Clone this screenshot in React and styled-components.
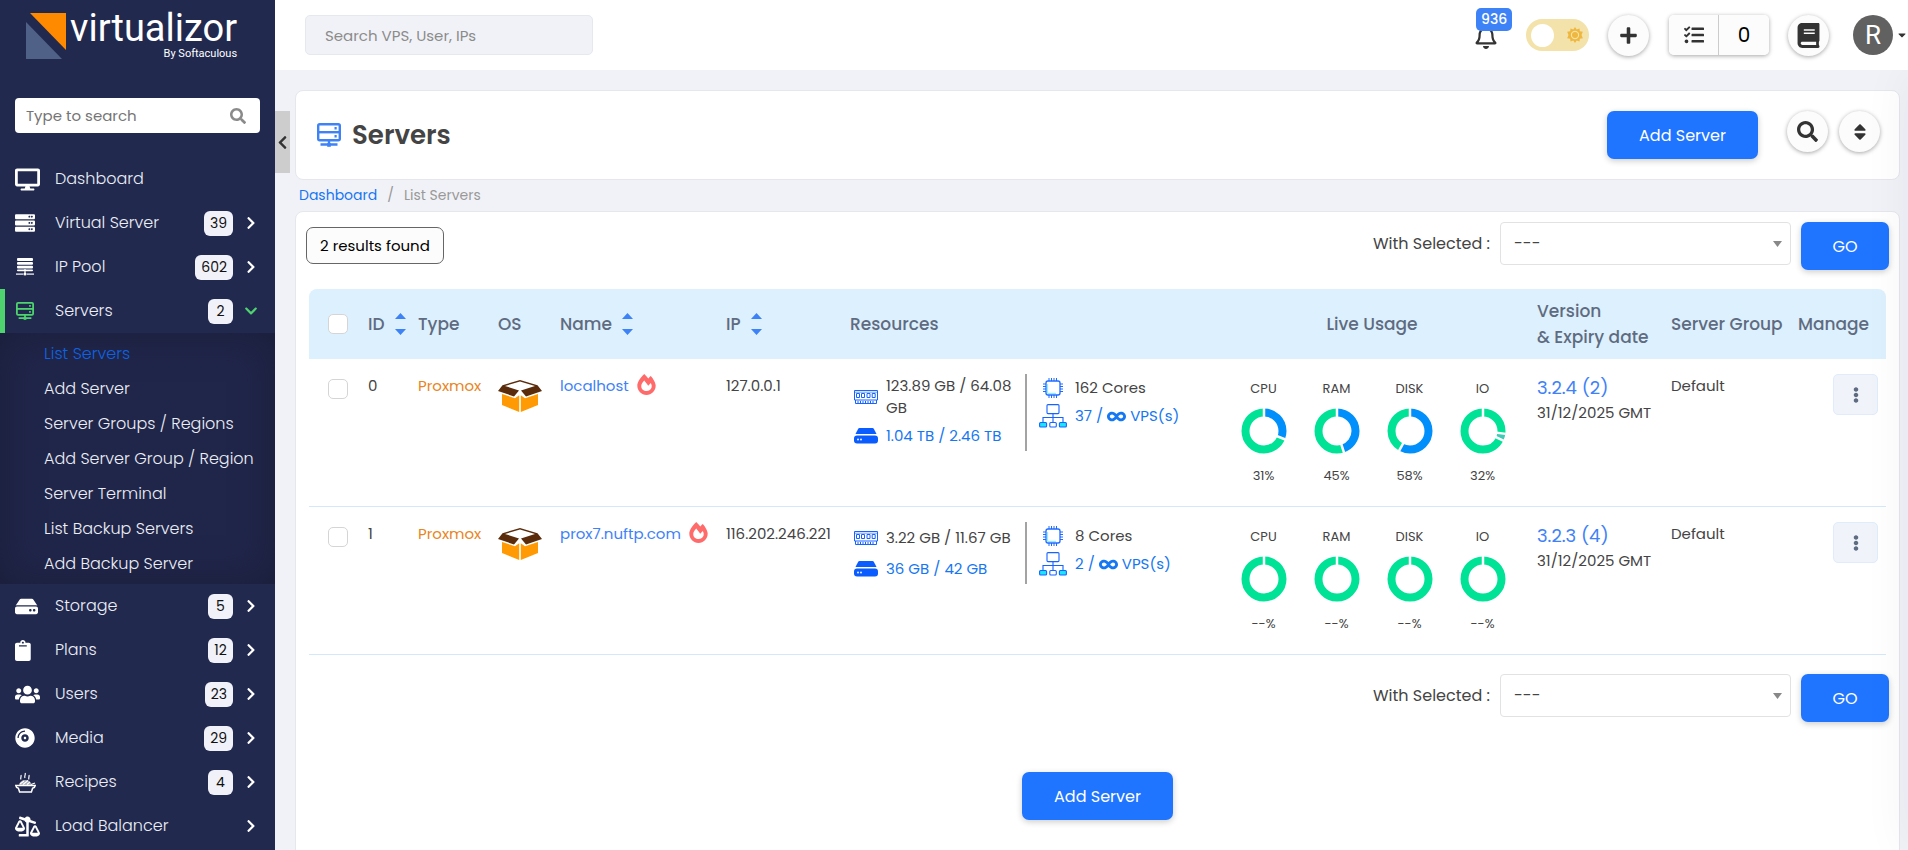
import React, { Component } from "react";
import styled, { createGlobalStyle } from "styled-components";
import {
  FaBalanceScaleRight,
  FaBook,
  FaCaretDown,
  FaChevronDown,
  FaChevronLeft,
  FaChevronRight,
  FaClipboard,
  FaCompactDisc,
  FaDesktop,
  FaEllipsisV,
  FaFireAlt,
  FaHdd,
  FaInfinity,
  FaPlus,
  FaRegBell,
  FaSearch,
  FaServer,
  FaSort,
  FaTasks,
  FaUsers
} from "react-icons/fa";

const GlobalStyle = createGlobalStyle`
  * {
    box-sizing: border-box;
  }

  body {
    margin: 0;
    background: #f1f2f7;
    color: #444;
    font-family: Poppins, Inter, sans-serif;
    font-size: 15px;
    line-height: 22px;
  }

  button, input, select {
    font-family: inherit;
  }

  button {
    cursor: pointer;
  }

  a {
    text-decoration: none;
  }

  svg {
    display: block;
    flex: none;
  }
`;

/* ---------- drawings ---------- */

const ServerIcon = ({ size }) => (
  <svg width={size} height={size} viewBox="0 0 24 24" fill="none" stroke="currentColor" strokeWidth="2.4">
    <rect x="1.2" y="1.2" width="21.6" height="16" rx="1.5" />
    <path d="M1 9.2h22" />
    <path d="M17.5 5.2h2.2M17.5 13.2h2.2" />
    <path d="M12 17v4M3.500 21.500h17" />
    <path d="M10.200 22h3.600" strokeWidth="3.6" />
  </svg>
);

const PoolIcon = () => (
  <svg width="18" height="18" viewBox="0 0 18 18" fill="currentColor">
    <rect x="1" y="0" width="16" height="3" rx="1" />
    <rect x="1" y="4" width="16" height="2.800" rx="1" />
    <rect x="1" y="7.800" width="16" height="2.800" rx="1" />
    <rect x="8.400" y="11" width="1.200" height="5" />
    <rect x="0" y="15.500" width="7" height="1.200" />
    <rect x="11" y="15.500" width="7" height="1.200" />
    <circle cx="9" cy="16" r="1.600" />
    <rect x="1" y="11.600" width="16" height="1.600" rx="0.800" />
  </svg>
);

const RecipeIcon = () => (
  <svg width="21" height="21" viewBox="0 0 21 21" fill="none" stroke="currentColor" strokeWidth="1.200">
    <path d="M6 7.500c-1-1.500.6-2.600 0-4.500M10 6c-1-1.800.8-3 .2-5M14 7.500c-1-1.500.6-2.600 0-4.500" />
    <path d="M4 13c.5-3 3-5 6.500-5s5.500 2 6 5z" fill="currentColor" fillOpacity="0.6" stroke="none" />
    <path d="M5 12l4-3M8 12.500l5-4M12 12.500l3-2.500M16 12.500l4-1.500" />
    <path d="M.8 13.600h19.400c-.2 1.400-1.200 2.400-2.600 2.600L16.400 20H4.600l-1.200-3.800C2 16 1 15 .8 13.600z" strokeWidth="1.500" />
  </svg>
);

const SunIcon = () => (
  <svg width="16" height="16" viewBox="0 0 16 16" fill="#efb73e">
    <path d="M8 0l1.700 2.500L12.500 1.400l.3 2.900 3 .5L14.500 8l1.300 3.200-3 .5-.3 2.900-2.800-1.100L8 16l-1.700-2.500-2.800 1.100-.3-2.900-3-.5L1.500 8 .2 4.800l3-.5.3-2.900 2.800 1.100z" />
    <circle cx="8" cy="8" r="4.200" fill="#f3e2a9" />
    <circle cx="8" cy="8" r="3" />
  </svg>
);

const BoxIcon = () => (
  <svg width="44" height="32" viewBox="0 0 44 32">
    <path d="M4 14l13 4.200 4.200-3V32L4 25z" fill="#ff9a05" />
    <path d="M40 14l-13 4.200-4.200-3V32L40 25z" fill="#ff9a05" />
    <path d="M22 0L4.500 5.200 0 11l16 5.400 5-6L7 6l15-4.400L37 6l-14 4.400 5 6L44 11l-4.500-5.800z" fill="#5a2c0b" />
  </svg>
);

const RamIcon = () => (
  <svg width="24" height="14" viewBox="0 0 24 14" fill="none" stroke="#1763ff" strokeWidth="1">
    <path d="M.5.500h23v9.500H.5z" />
    <path d="M0 2.200h24" strokeWidth="0.600" />
    <path d="M2.500 3.500h3v4h-3zM7.500 3.500h3v4h-3zM13 3.500h3v4h-3zM18.200 3.500h3v4h-3z" />
    <path d="M1.500 10v3.500h21V10" />
    <path d="M4 11v2M6.500 11v2M9 11v2M11.500 11v2M14 11v2M16.500 11v2M19 11v2" />
  </svg>
);

const DiskIcon = () => (
  <svg width="24" height="16" viewBox="0 0 24 16">
    <path d="M5.500 0h13c.6 0 1 .3 1.300.8L22.500 6h-21L4.200.8C4.500.3 5 0 5.500 0z" fill="#0a5cff" />
    <rect x="0" y="7.500" width="24" height="8" rx="3" fill="#0a5cff" />
    <circle cx="4" cy="11.500" r="0.900" fill="#fff" />
    <circle cx="7" cy="11.500" r="0.900" fill="#fff" />
  </svg>
);

const ChipIcon = () => (
  <svg width="20" height="20" viewBox="0 0 20 20" fill="none" stroke="#1f6bff">
    <path d="M6 0v3M8.500 0v3M11 0v3M13.500 0v3M6 17v3M8.500 17v3M11 17v3M13.500 17v3M0 6h3M0 8.500h3M0 11h3M0 13.500h3M17 6h3M17 8.500h3M17 11h3M17 13.500h3" />
    <rect x="3" y="3" width="14" height="14" rx="2" fill="#fff" strokeWidth="1.300" />
    <path d="M4.600 6v9.400H13" stroke="#7df1ff" />
  </svg>
);

const NetworkIcon = () => (
  <svg width="28" height="24" viewBox="0 0 28 24" fill="none" stroke="#1763ff" strokeWidth="1.100">
    <rect x="8" y="0.600" width="12" height="9" rx="1" />
    <path d="M14 9.600V18M4 18v-4.500h20V18" />
    <rect x="0.600" y="18.500" width="7" height="4.500" rx="1" fill="#19e6ff" />
    <rect x="10.800" y="18.500" width="6.500" height="4.500" rx="1" fill="#fff" />
    <rect x="20.400" y="18.500" width="7" height="4.500" rx="1" fill="#19e6ff" />
  </svg>
);

/* ---------- sidebar ---------- */

const Sidebar = styled.aside`
  position: relative;
  flex: none;
  width: 275px;
  background: #21294f;
`;

const Logo = styled.a`
  display: flex;
  height: 74px;
  margin-bottom: 24px;
  padding: 13px 0 0 26px;
  color: #fff;
  font-family: Roboto, sans-serif;
`;

const LogoText = styled.span`
  display: flex;
  flex-direction: column;
  align-items: flex-end;
  margin-left: 4px;
`;

const LogoName = styled.span`
  font-size: 38px;
  line-height: 30px;
`;

const LogoOwner = styled.span`
  margin-top: 4px;
  font-size: 11px;
  line-height: 13px;
`;

const SideSearch = styled.label`
  display: flex;
  align-items: center;
  height: 35px;
  margin: 0 15px 24px;
  padding: 0 14px 0 11px;
  border-radius: 4px;
  background: #fff;
  color: #8a8a8a;
`;

const SideSearchInput = styled.input`
  flex: 1;
  min-width: 0;
  padding: 0;
  border: none;
  outline: none;
  background: none;
  font-size: 15px;

  &::placeholder {
    color: #757575;
  }
`;

const NavLink = styled.a`
  display: flex;
  align-items: center;
  height: 44px;
  padding: 0 18px 0 15px;
  box-shadow: ${props => (props.$open ? "inset 5px 0 #4fd36f" : "none")};
  color: ${props => (props.$open ? "#4fd36f" : "#fff")};
`;

const NavIcon = styled.span`
  width: 40px;
  padding-left: ${props => (props.$inset ? "1px" : "0")};
`;

const NavLabel = styled.span`
  flex: 1;
  color: #eceef5;
  font-size: 16px;
  font-weight: 300;
`;

const NavCount = styled.span`
  min-width: 25px;
  margin-right: 12px;
  padding: 0 6px;
  border-radius: 6px;
  background: #f1f2f9;
  color: #111;
  font-size: 14px;
  line-height: 25px;
  text-align: center;
`;

const NavArrow = styled.span`
  display: flex;
  justify-content: center;
  width: 12px;
`;

const SubMenu = styled.div`
  padding: 3px 0;
  background: #20264a;
  box-shadow: inset 0 0 40px #1b1e3a;
`;

const SubLink = styled.a`
  display: block;
  padding-left: 44px;
  color: ${props => (props.$active ? "#0f62e0" : "#eceef5")};
  font-size: 16px;
  font-weight: 300;
  line-height: 35px;
  white-space: nowrap;
`;

const CollapseButton = styled.button`
  position: absolute;
  top: 111px;
  left: 100%;
  z-index: 1;
  display: flex;
  align-items: center;
  justify-content: center;
  width: 15px;
  height: 62px;
  padding: 0;
  border: none;
  background: #cdcdcd;
  color: #333;
`;

const navItems = [
  { label: "Dashboard", icon: <FaDesktop size={25} />, plain: true },
  { label: "Virtual Server", icon: <FaServer size={20} />, count: 39 },
  { label: "IP Pool", icon: <PoolIcon />, count: 602, inset: true },
  {
    label: "Servers",
    icon: <ServerIcon size={18} />,
    count: 2,
    inset: true,
    children: [
      "List Servers",
      "Add Server",
      "Server Groups / Regions",
      "Add Server Group / Region",
      "Server Terminal",
      "List Backup Servers",
      "Add Backup Server"
    ]
  },
  { label: "Storage", icon: <FaHdd size={23} />, count: 5 },
  { label: "Plans", icon: <FaClipboard size={21} preserveAspectRatio="xMinYMid" />, count: 12 },
  { label: "Users", icon: <FaUsers size={25} />, count: 23 },
  { label: "Media", icon: <FaCompactDisc size={20} />, count: 29 },
  { label: "Recipes", icon: <RecipeIcon />, count: 4 },
  { label: "Load Balancer", icon: <FaBalanceScaleRight size={25} /> }
];

const NavItem = ({ item }) => (
  <>
    <NavLink href="#" $open={!!item.children}>
      <NavIcon $inset={item.inset}>{item.icon}</NavIcon>
      <NavLabel>{item.label}</NavLabel>
      {item.count && <NavCount>{item.count}</NavCount>}
      {!item.plain && (
        <NavArrow>
          {item.children ? <FaChevronDown size={14} /> : <FaChevronRight size={14} />}
        </NavArrow>
      )}
    </NavLink>
    {item.children && (
      <SubMenu>
        {item.children.map((name, i) => (
          <SubLink href="#" key={name} $active={i === 0}>
            {name}
          </SubLink>
        ))}
      </SubMenu>
    )}
  </>
);

/* ---------- top bar ---------- */

const Page = styled.div`
  display: flex;
  height: 100vh;
  overflow: hidden;
`;

const Content = styled.div`
  display: flex;
  flex: 1;
  flex-direction: column;
  min-width: 0;
`;

const TopBar = styled.header`
  position: relative;
  z-index: 3;
  display: flex;
  flex: none;
  align-items: center;
  height: 70px;
  padding-left: 30px;
  background: #fff;
`;

const TopSearch = styled.input`
  width: 288px;
  height: 40px;
  margin-right: auto;
  padding: 0 19px;
  border: 1px solid #e6e8f0;
  border-radius: 5px;
  outline: none;
  background: #f1f2f7;
  font-size: 15px;

  &::placeholder {
    color: #8b8b8b;
  }
`;

const BellButton = styled.button`
  position: relative;
  margin-right: 28px;
  padding: 4px 0 0;
  border: none;
  background: none;
  color: #333;
`;

const BellCount = styled.span`
  position: absolute;
  top: -13px;
  left: 2px;
  padding: 0 5px;
  border-radius: 5px;
  background: #3e82f7;
  color: #fff;
  font-size: 14px;
  font-weight: 500;
  line-height: 23px;
`;

const ThemeSwitch = styled.label`
  display: flex;
  align-items: center;
  justify-content: space-between;
  width: 63px;
  height: 32px;
  margin-right: 19px;
  padding: 0 6px 0 5px;
  border-radius: 16px;
  background: #f3e2a9;
`;

const ThemeInput = styled.input`
  appearance: none;
  width: 23px;
  height: 23px;
  margin: 0;
  border-radius: 50%;
  background: #fff;
`;

const RoundButton = styled.button`
  display: flex;
  align-items: center;
  justify-content: center;
  width: 41px;
  height: 41px;
  padding: 0;
  border: none;
  border-radius: 50%;
  background: #fcfcfc;
  box-shadow: 0 1px 4px rgba(0, 0, 0, 0.35);
  color: #333;
`;

const TaskGroup = styled.div`
  display: flex;
  margin: 0 19px 0 20px;
  border-radius: 5px;
  box-shadow: 0 1px 4px rgba(0, 0, 0, 0.35);
`;

const TaskButton = styled.button`
  display: flex;
  align-items: center;
  justify-content: center;
  width: 50px;
  height: 40px;
  padding: 0;
  border: none;
  border-right: ${props => (props.$split ? "1px solid #ccc" : "none")};
  border-radius: ${props => (props.$split ? "5px 0 0 5px" : "0 5px 5px 0")};
  background: #fcfcfc;
  color: ${props => (props.$split ? "#333" : "#000")};
  font-size: 20px;
`;

const UserMenu = styled.button`
  display: flex;
  align-items: center;
  gap: 3px;
  margin-left: 24px;
  padding: 0;
  border: none;
  background: none;
  color: #333;
`;

const UserInitial = styled.span`
  width: 40px;
  border-radius: 50%;
  background: #616161;
  color: #fff;
  font-family: Roboto, sans-serif;
  font-size: 26px;
  line-height: 40px;
`;

/* ---------- page parts ---------- */

const Main = styled.main`
  position: relative;
  display: flex;
  flex: 1;
  flex-direction: column;
  min-height: 0;
  padding: 20px 8px 0 20px;
  overflow: hidden;

  &::after {
    content: "";
    position: absolute;
    top: 0;
    bottom: 0;
    left: 100%;
    width: 40px;
    box-shadow: 0 0 50px rgba(40, 40, 90, 0.06);
    pointer-events: none;
  }
`;

const Card = styled.section`
  border: 1px solid #e6e7ec;
  border-radius: 8px;
  background: #fff;
`;

const TitleCard = styled(Card)`
  display: flex;
  flex: none;
  align-items: flex-start;
  gap: 11px;
  height: 90px;
  padding: 20px 19px 0 21px;
`;

const Title = styled.h1`
  display: flex;
  align-items: center;
  gap: 11px;
  height: 48px;
  margin: 0 auto 0 0;
  color: #444;
  font-size: 26px;
  font-weight: 600;

  svg {
    color: #3e82f7;
  }
`;

const PrimaryButton = styled.button`
  height: 48px;
  padding: 0;
  width: ${props => (props.$small ? "88px" : "151px")};
  border: none;
  border-radius: 7px;
  background: #1f75ff;
  box-shadow: 0 2px 6px rgba(0, 0, 0, 0.2);
  color: #fff;
  font-size: 16px;
`;

const TitleButton = styled(PrimaryButton)`
  margin-right: 18px;
`;

const Breadcrumb = styled.nav`
  display: flex;
  gap: 10px;
  padding: 4px 4px 5px;
  color: #999;
  font-size: 14px;

  a {
    color: #1677f2;
  }
`;

const ListCard = styled(Card)`
  flex: 1 0 auto;
  padding: 10px 10px 60px;
`;

const Toolbar = styled.div`
  display: flex;
  align-items: flex-start;
  justify-content: flex-end;
  gap: 10px;
`;

const Results = styled.div`
  margin: 5px auto 0 0;
  padding: 0 13px;
  border: 1px solid #666;
  border-radius: 7px;
  background: #fcfcfc;
  color: #000;
  font-size: 15px;
  line-height: 35px;
`;

const SelectLabel = styled.label`
  display: flex;
  gap: 10px;
  font-size: 16px;
  line-height: 44px;
`;

const SelectBox = styled.span`
  display: flex;
  align-items: center;
  width: 291px;
  height: 43px;
  padding-right: 8px;
  border: 1px solid #e2e2e2;
  border-radius: 4px;
  background: #fff;
  color: #888;
`;

const Select = styled.select`
  flex: 1;
  height: 41px;
  padding: 0 13px;
  border: none;
  outline: none;
  appearance: none;
  background: none;
  color: #444;
  font-size: 16px;
`;

const Table = styled.table`
  width: calc(100% - 6px);
  margin: 19px 3px;
  border-collapse: separate;
  border-spacing: 0;
  table-layout: fixed;
`;

const Th = styled.th`
  height: 70px;
  padding: 0 8px;
  background: #dcf0fe;
  color: #5f6b80;
  font-size: 17px;
  font-weight: 500;
  line-height: 26px;
  text-align: ${props => props.$align || "left"};
  white-space: nowrap;

  &:first-child {
    border-top-left-radius: 8px;
  }

  &:last-child {
    border-top-right-radius: 8px;
  }
`;

const SortLabel = styled.span`
  display: flex;
  align-items: center;
  gap: 10px;
`;

const Td = styled.td`
  height: 148px;
  padding: 15px 8px 0;
  border-bottom: 1px solid #d3e9fb;
  line-height: 24px;
  text-align: ${props => props.$align || "left"};
  vertical-align: top;
`;

const Check = styled.input`
  appearance: none;
  display: block;
  width: 20px;
  height: 20px;
  margin: ${props => (props.$row ? "5px" : "0")} 0 0 11px;
  border: 1px solid #d5d5d5;
  border-radius: 5px;
  background: #fff;
`;

const TypeText = styled.span`
  color: #e8851c;
`;

const OsCell = styled.div`
  padding-top: 6px;
`;

const NameCell = styled.div`
  display: flex;
  align-items: flex-start;
  gap: 7px;
  color: #ff6b6b;
`;

const NameLink = styled.a`
  color: #3e82f7;
`;

const Resources = styled.div`
  display: flex;
  padding-left: 4px;
  line-height: 22px;
`;

const Storage = styled.div`
  width: 173px;
  border-right: 2px solid #a3a3a3;
`;

const Metric = styled.div`
  display: flex;
  align-items: center;
  gap: 8px;
  min-height: 31px;
  padding: 1px 8px 1px 0;
`;

const Capacity = styled.div`
  display: flex;
  flex-direction: column;
  padding-left: 12px;
`;

const CapacityRow = styled.div`
  display: flex;
  align-items: center;
  gap: 8px;
  height: 28px;
`;

const CapacityIcon = styled.span`
  display: flex;
  justify-content: center;
  width: 28px;
`;

const InfoLink = styled.a`
  display: flex;
  align-items: center;
  gap: 4px;
  color: #1677f2;
`;

const Usage = styled.div`
  display: flex;
  justify-content: center;
`;

const Gauge = styled.div`
  display: flex;
  flex-direction: column;
  align-items: center;
  width: 73px;
  padding: 3px 0 0 2px;
  font-size: 13px;

  svg {
    margin: 7px 0 10px;
  }
`;

const Version = styled.a`
  display: block;
  color: #3e82f7;
  font-size: 18px;
  line-height: 28px;
`;

const ExpiryDate = styled.div`
  line-height: 22px;
  white-space: nowrap;
`;

const MenuButton = styled.button`
  display: inline-flex;
  align-items: center;
  justify-content: center;
  width: 45px;
  height: 41px;
  padding: 0;
  border: 1px solid #e0ecfb;
  border-radius: 5px;
  background: #f0f3f9;
  color: #5f6b80;
`;

const AddRow = styled.div`
  display: flex;
  justify-content: center;
  padding-top: 50px;
`;

const servers = [
  {
    id: 0,
    name: "localhost",
    ip: "127.0.0.1",
    ram: "123.89 GB / 64.08 GB",
    disk: "1.04 TB / 2.46 TB",
    cores: 162,
    vps: 37,
    usage: [31, 45, 58, 32],
    version: "3.2.4 (2)"
  },
  {
    id: 1,
    name: "prox7.nuftp.com",
    ip: "116.202.246.221",
    ram: "3.22 GB / 11.67 GB",
    disk: "36 GB / 42 GB",
    cores: 8,
    vps: 2,
    usage: [null, null, null, null],
    version: "3.2.3 (4)"
  }
];

const GAUGES = ["CPU", "RAM", "DISK", "IO"];

// slices of each donut as [share, colour]
const getSlices = (label, value) => {
  if (value === null) {
    return [[100, "#00e396"]];
  }
  if (label === "IO") {
    return [[27, "#00e396"], [5, "#40c9b5"], [68, "#00e396"]];
  }
  return [[value, "#008ffb"], [100 - value, "#00e396"]];
};

const Donut = ({ slices }) => {
  const point = share => {
    const angle = (share / 100) * 2 * Math.PI - Math.PI / 2;
    return [23 + 23 * Math.cos(angle), 23 + 23 * Math.sin(angle)];
  };
  let offset = 0;
  const starts = slices.map(([share]) => {
    const start = offset;
    offset += share;
    return start;
  });

  return (
    <svg width="46" height="46" viewBox="0 0 46 46">
      {slices.map(([share, color], i) => (
        <circle
          key={i}
          cx="23"
          cy="23"
          r="18.5"
          fill="none"
          stroke={color}
          strokeWidth="8"
          pathLength="100"
          strokeDasharray={`${share} 100`}
          strokeDashoffset={-starts[i]}
          transform="rotate(-90 23 23)"
        />
      ))}
      {starts.map(start => {
        const [x, y] = point(start);
        return <line key={start} x1="23" y1="23" x2={x} y2={y} stroke="#fff" strokeWidth="2.5" />;
      })}
    </svg>
  );
};

const SortHeader = ({ children }) => (
  <SortLabel>
    {children}
    <svg width="11" height="22" viewBox="0 0 11 22" fill="#3e82f7">
      <path d="M5.500 0L11 6H0zM5.500 22L11 16H0z" />
    </svg>
  </SortLabel>
);

const BulkAction = ({ id }) => (
  <>
    <SelectLabel htmlFor={id}>
      With Selected :
      <SelectBox>
        <Select id={id}>
          <option>---</option>
        </Select>
        <svg width="9" height="6" viewBox="0 0 9 6" fill="currentColor">
          <path d="M0 0h9L4.500 6z" />
        </svg>
      </SelectBox>
    </SelectLabel>
    <PrimaryButton $small>GO</PrimaryButton>
  </>
);

const ServerRow = ({ server }) => (
  <tr>
    <Td>
      <Check type="checkbox" $row aria-label={`Select ${server.name}`} />
    </Td>
    <Td>{server.id}</Td>
    <Td>
      <TypeText>Proxmox</TypeText>
    </Td>
    <Td>
      <OsCell>
        <BoxIcon />
      </OsCell>
    </Td>
    <Td>
      <NameCell>
        <NameLink href="#">{server.name}</NameLink>
        <FaFireAlt size={21} />
      </NameCell>
    </Td>
    <Td>{server.ip}</Td>
    <Td>
      <Resources>
        <Storage>
          <Metric>
            <RamIcon />
            <span>{server.ram}</span>
          </Metric>
          <Metric>
            <DiskIcon />
            <InfoLink href="#">{server.disk}</InfoLink>
          </Metric>
        </Storage>
        <Capacity>
          <CapacityRow>
            <CapacityIcon>
              <ChipIcon />
            </CapacityIcon>
            {server.cores} Cores
          </CapacityRow>
          <CapacityRow>
            <CapacityIcon>
              <NetworkIcon />
            </CapacityIcon>
            <InfoLink href="#">
              {server.vps} / <FaInfinity size={19} /> VPS(s)
            </InfoLink>
          </CapacityRow>
        </Capacity>
      </Resources>
    </Td>
    <Td>
      <Usage>
        {GAUGES.map((label, i) => (
          <Gauge key={label}>
            {label}
            <Donut slices={getSlices(label, server.usage[i])} />
            <span>{server.usage[i] === null ? "--" : server.usage[i]}%</span>
          </Gauge>
        ))}
      </Usage>
    </Td>
    <Td>
      <Version href="#">{server.version}</Version>
      <ExpiryDate>31/12/2025 GMT</ExpiryDate>
    </Td>
    <Td>Default</Td>
    <Td $align="right">
      <MenuButton aria-label="Manage">
        <FaEllipsisV size={16} />
      </MenuButton>
    </Td>
  </tr>
);

const columns = [51, 50, 80, 62, 166, 124, null, 314, 134, 127, 96];

class App extends Component {
  render() {
    return (
      <Page>
        <GlobalStyle />
        <Sidebar>
          <Logo href="#">
            <svg width="40" height="46" viewBox="0 0 40 46">
              <path d="M4 0h36v37z" fill="#ff8a00" />
              <path d="M0 9v37h36z" fill="#4f6186" />
            </svg>
            <LogoText>
              <LogoName>virtualizor</LogoName>
              <LogoOwner>By Softaculous</LogoOwner>
            </LogoText>
          </Logo>
          <SideSearch>
            <SideSearchInput placeholder="Type to search" aria-label="Type to search" />
            <FaSearch size={16} />
          </SideSearch>
          <nav>
            {navItems.map(item => (
              <NavItem key={item.label} item={item} />
            ))}
          </nav>
          <CollapseButton aria-label="Collapse menu">
            <FaChevronLeft size={15} />
          </CollapseButton>
        </Sidebar>

        <Content>
          <TopBar>
            <TopSearch placeholder="Search VPS, User, IPs" aria-label="Search VPS, User, IPs" />
            <BellButton aria-label="Notifications">
              <FaRegBell size={24} />
              <BellCount>936</BellCount>
            </BellButton>
            <ThemeSwitch>
              <ThemeInput type="checkbox" aria-label="Dark mode" />
              <SunIcon />
            </ThemeSwitch>
            <RoundButton aria-label="Add">
              <FaPlus size={19} />
            </RoundButton>
            <TaskGroup>
              <TaskButton $split aria-label="Tasks">
                <FaTasks size={20} />
              </TaskButton>
              <TaskButton>0</TaskButton>
            </TaskGroup>
            <RoundButton aria-label="Documentation">
              <FaBook size={25} />
            </RoundButton>
            <UserMenu aria-label="Account">
              <UserInitial>R</UserInitial>
              <FaCaretDown size={12} />
            </UserMenu>
          </TopBar>

          <Main>
            <TitleCard>
              <Title>
                <ServerIcon size={24} />
                Servers
              </Title>
              <TitleButton>Add Server</TitleButton>
              <RoundButton aria-label="Search servers">
                <FaSearch size={21} />
              </RoundButton>
              <RoundButton aria-label="Sort servers">
                <FaSort size={20} />
              </RoundButton>
            </TitleCard>

            <Breadcrumb>
              <a href="#">Dashboard</a>
              <span>/</span>
              <span>List Servers</span>
            </Breadcrumb>

            <ListCard>
              <Toolbar>
                <Results>2 results found</Results>
                <BulkAction id="action-top" />
              </Toolbar>

              <Table>
                <colgroup>
                  {columns.map((width, i) => (
                    <col key={i} width={width || undefined} />
                  ))}
                </colgroup>
                <thead>
                  <tr>
                    <Th>
                      <Check type="checkbox" aria-label="Select all" />
                    </Th>
                    <Th>
                      <SortHeader>ID</SortHeader>
                    </Th>
                    <Th>Type</Th>
                    <Th>OS</Th>
                    <Th>
                      <SortHeader>Name</SortHeader>
                    </Th>
                    <Th>
                      <SortHeader>IP</SortHeader>
                    </Th>
                    <Th>Resources</Th>
                    <Th $align="center">Live Usage</Th>
                    <Th>
                      Version
                      <br />
                      &amp; Expiry date
                    </Th>
                    <Th>Server Group</Th>
                    <Th>Manage</Th>
                  </tr>
                </thead>
                <tbody>
                  {servers.map(server => (
                    <ServerRow key={server.id} server={server} />
                  ))}
                </tbody>
              </Table>

              <Toolbar>
                <BulkAction id="action-bottom" />
              </Toolbar>

              <AddRow>
                <PrimaryButton>Add Server</PrimaryButton>
              </AddRow>
            </ListCard>
          </Main>
        </Content>
      </Page>
    );
  }
}

export default App;
